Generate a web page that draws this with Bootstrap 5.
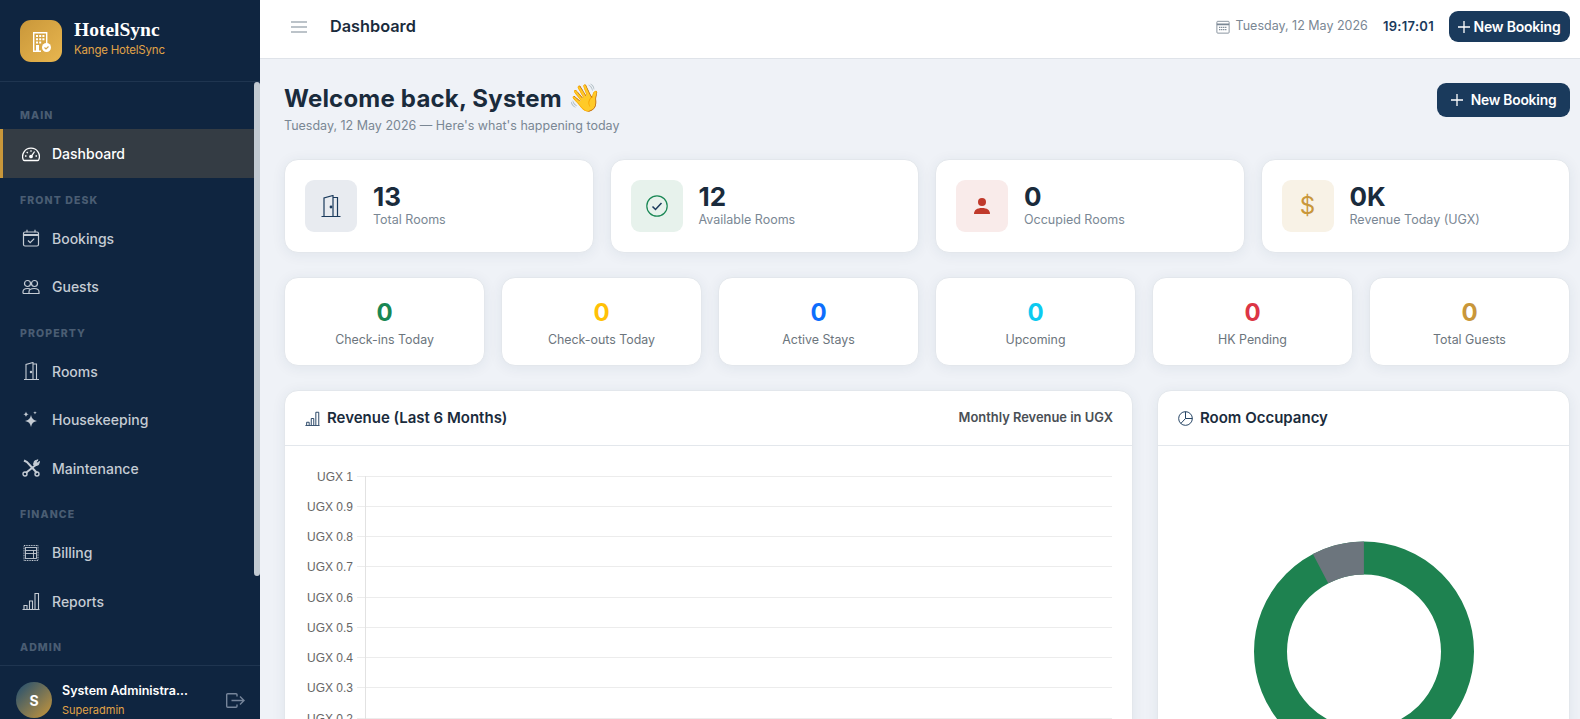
<!DOCTYPE html>
<html lang="en">
<head>
  <meta charset="UTF-8">
  <meta name="viewport" content="width=device-width, initial-scale=1.0">
  <title>Dashboard - HotelSync</title>
  <link href="https://cdn.jsdelivr.net/npm/bootstrap@5.3.1/dist/css/bootstrap.min.css" rel="stylesheet">
  <style>
    html, body { height: 100%; overflow: hidden; }
    body {
      font-family: Inter, "Open Sans", sans-serif;
      background-color: #eff2f7;
      color: #1a2b3c;
    }
    .app-shell { height: 719px; }
    .side-panel { width: 260px; background-color: #0f2540; flex-shrink: 0; }
    .main-col { min-width: 0; }
    .brand-box { height: 82px; padding: 17px 20px; border-bottom: 1px solid #1f3550; gap: 12px; }
    .brand-logo {
      width: 42px; height: 42px; border-radius: 11px;
      background: linear-gradient(135deg, #c9973a, #e8b64f);
    }
    .brand-text { margin-top: -4px; }
    .brand-name { font-family: "Liberation Serif", serif; font-weight: 700; font-size: 19.5px; line-height: 22px; color: #fff; }
    .brand-sub { font-size: 11.5px; line-height: 18px; color: #e0a347; letter-spacing: -.2px; }
    .side-scroll { flex: 1 1 auto; min-height: 0; overflow: hidden; position: relative; padding-top: 27px; }
    .side-scroll::after {
      content: ""; position: absolute; right: 0; top: 0; width: 6px; height: 494px;
      background-color: #c2cad2; border-radius: 3px;
    }
    .nav-head {
      font-size: 10.5px; font-weight: 800; letter-spacing: 1.1px; color: #4a5d73;
      padding: 0 20px; line-height: 14px; margin-bottom: 6.25px;
    }
    .nav-line {
      height: 48.5px; padding-left: 19px; gap: 12px; color: #c5ccd4; font-size: 14px;
      font-weight: 500; text-decoration: none; border-left: 3px solid transparent;
    }
    .nav-line.is-on { background-color: #343c44; color: #fff; border-left-color: #c9973a; margin-right: 6px; }
    .nav-group { margin-bottom: 15.75px; }
    .side-user { height: 54px; border-top: 1px solid #1f3550; padding: 16px 16px 0; gap: 10px; flex-shrink: 0; overflow: hidden; }
    .user-dot {
      width: 36px; height: 36px; border-radius: 50%; color: #fff; font-weight: 700; font-size: 14px;
      background: linear-gradient(135deg, #1e4d72, #c9973a); flex-shrink: 0;
    }
    .user-name { font-size: 12.5px; font-weight: 600; line-height: 18px; color: #fff; width: 128px; white-space: nowrap; overflow: hidden; text-overflow: ellipsis; }
    .user-role { font-size: 11px; line-height: 20px; color: #e0a347; }
    .user-exit { margin-top: 11px; margin-left: 1px; margin-right: -1px; }
    .top-strip { height: 59px; background-color: #fff; border-bottom: 1px solid #dfe3e9; padding: 0 10px 5px 31px; flex-shrink: 0; }
    .top-title { font-size: 16.3px; font-weight: 600; color: #1a2b3c; margin-left: 23px; }
    .top-cal { margin-right: 6px; }
    .top-date { font-size: 12.5px; color: #7a8794; }
    .top-clock { font-size: 13px; font-weight: 600; color: #1a3a5c; letter-spacing: .3px; margin: 0 15px; }
    .book-btn { background-color: #1a3a5c; color: #fff; font-weight: 600; border: 0; border-radius: 9px; padding: 0; letter-spacing: -.2px; }
    .book-btn:hover { background-color: #16324f; color: #fff; }
    .book-sm { width: 121px; height: 31px; font-size: 14px; gap: 3px; }
    .book-lg { width: 133px; height: 34px; font-size: 13.8px; gap: 8px; margin-top: 2px; }
    .page-body { padding: 22px 10px 0 24px; overflow: hidden; }
    .hello-title { font-size: 24px; font-weight: 700; line-height: 36px; margin: 0; color: #1a2b3c; letter-spacing: .2px; }
    .hello-wave { font-size: 27px; line-height: 1; }
    .hello-sub { font-size: 12.5px; line-height: 18px; color: #7a8794; }
    .stat-grid { display: grid; grid-template-columns: repeat(4, 1fr); gap: 16px; margin-top: 24px; }
    .mini-grid { display: grid; grid-template-columns: repeat(6, 1fr); gap: 16px; margin-top: 24px; }
    .chart-grid { display: grid; grid-template-columns: 849px 1fr; gap: 24px; margin-top: 24px; }
    .tile {
      background-color: #fff; border: 1px solid #e3e7ec; border-radius: 14px;
      box-shadow: 0 2px 14px rgba(26, 58, 92, .07);
    }
    .stat-tile { height: 94px; padding: 20px; gap: 16px; }
    .stat-icon { width: 52px; height: 52px; border-radius: 9px; flex-shrink: 0; }
    .stat-dollar { background-color: #f8f2e6; color: #c9973a; font-size: 24px; }
    .stat-num { font-size: 26px; font-weight: 700; line-height: 28px; color: #1a2b3c; }
    .stat-cap { font-size: 12.5px; line-height: 18px; color: #7a8794; }
    .mini-tile { height: 89px; text-align: center; padding-top: 20px; }
    .mini-num { font-size: 24px; font-weight: 700; line-height: 30px; }
    .mini-cap { font-size: 12.4px; line-height: 18px; color: #6c757d; margin-top: 3px; }
    .panel-head { height: 55px; padding: 0 19px 0 20px; border-bottom: 1px solid #e3e7ec; }
    .panel-title { font-size: 15px; font-weight: 600; color: #1a2b3c; gap: 7px; }
    .panel-note { font-size: 12.9px; font-weight: 600; color: #4a4f55; }
    .chart-tile { height: 400px; overflow: hidden; }
    .axis-text { font-family: "Liberation Sans", sans-serif; font-size: 12px; fill: #666; }
  </style>
</head>
<body>
<div class="app-shell d-flex">
  <aside class="side-panel d-flex flex-column">
    <div class="brand-box d-flex align-items-center">
      <div class="brand-logo d-flex align-items-center justify-content-center">
        <svg width="20" height="22" viewBox="0 0 20 22">
          <path fill="none" stroke="#fff" stroke-width="1.4" d="M2.700 21.300V2.700h13v12"/>
          <path fill="#fff" d="M2 20.500h8V22H2zM5 5h2v2H5zM8.200 5h2v2h-2zM11.400 5h2v2h-2zM5 8.200h2v2H5zM8.200 8.200h2v2h-2zM11.400 8.200h2v2h-2zM5 11.400h2v2H5zM8.200 11.400h2v2h-2zM5 15h3v6H5z"/>
          <circle cx="15.500" cy="17.500" r="4.500" fill="#fff"/>
          <path d="M13.500 17.500l1.500 1.500 2.500-2.500" fill="none" stroke="#d4a548" stroke-width="1.100"/>
        </svg>
      </div>
      <div class="brand-text">
        <div class="brand-name">HotelSync</div>
        <div class="brand-sub">Kange HotelSync</div>
      </div>
    </div>
    <nav class="side-scroll">
      <div class="nav-head">MAIN</div>
      <a href="#" class="nav-line is-on d-flex align-items-center nav-group">
        <svg width="18" height="18" viewBox="0 0 18 18" fill="none" stroke="#fff" stroke-width="1.300">
          <path d="M2.600 15.500h12.800c.7 0 1.100-.3 1.400-.9A8.300 8.300 0 0 0 9 3.200a8.300 8.300 0 0 0-7.800 11.400c.3.600.7.900 1.400.9z"/>
          <path d="M9 5.200v1.600M4.700 7l1.100 1.100M3 11h1.500M13.500 11H15M12.600 6.500l-3 4.300"/>
          <circle cx="9" cy="11.500" r="1.200" fill="#fff"/>
        </svg>
        <span>Dashboard</span>
      </a>
      <div class="nav-head">FRONT DESK</div>
      <a href="#" class="nav-line d-flex align-items-center">
        <svg width="18" height="18" viewBox="0 0 18 18" fill="none" stroke="#c5ccd4" stroke-width="1.200">
          <rect x="1.500" y="3" width="15" height="14" rx="1.500"/>
          <path d="M1.500 6h15" stroke-width="2"/>
          <path d="M5 .8v2.500M13 .8v2.500M6 11.500l2.200 2.200 4-4"/>
        </svg>
        <span>Bookings</span>
      </a>
      <a href="#" class="nav-line d-flex align-items-center nav-group">
        <svg width="18" height="18" viewBox="0 0 18 18" fill="none" stroke="#c5ccd4" stroke-width="1.200">
          <circle cx="5.500" cy="5.500" r="3"/>
          <circle cx="12.500" cy="5.500" r="3"/>
          <path d="M1 15.500v-1.800c0-2 1.700-3.200 4.500-3.200.9 0 1.700.1 2.300.4M7 15.500h10v-1.800c0-2-2-3.200-4.800-3.200S7 11.700 7 13.700zM1 15.500h6"/>
        </svg>
        <span>Guests</span>
      </a>
      <div class="nav-head">PROPERTY</div>
      <a href="#" class="nav-line d-flex align-items-center">
        <svg width="18" height="18" viewBox="0 0 18 18" fill="none" stroke="#c5ccd4" stroke-width="1.100">
          <path d="M2 17.500h15M4 17.500V2.500L11 .5v17M11 2h3.500v15.500"/>
          <circle cx="9" cy="10" r=".7" fill="#c5ccd4"/>
        </svg>
        <span>Rooms</span>
      </a>
      <a href="#" class="nav-line d-flex align-items-center">
        <svg width="18" height="18" viewBox="0 0 18 18" fill="#c5ccd4">
          <path d="M9 4c.6 3.600 2.400 5.400 6 6-3.600.6-5.400 2.400-6 6-.6-3.600-2.400-5.400-6-6 3.600-.6 5.400-2.400 6-6z"/>
          <path d="M4 .5c.3 1.700 1.100 2.500 2.800 2.800C5.100 3.600 4.300 4.400 4 6.100 3.700 4.400 2.900 3.600 1.200 3.300 2.900 3 3.700 2.200 4 .5z"/>
          <path d="M13 0c.2 1.100.7 1.600 1.800 1.800-1.100.2-1.600.7-1.800 1.800-.2-1.100-.7-1.600-1.800-1.800C12.300 1.600 12.800 1.100 13 0z"/>
        </svg>
        <span>Housekeeping</span>
      </a>
      <a href="#" class="nav-line d-flex align-items-center nav-group">
        <svg width="18" height="18" viewBox="0 0 18 18" fill="none" stroke="#c5ccd4">
          <path d="M2 1.500l3 1.500 10 11" stroke-width="2"/>
          <path d="M15.500 4.500 3.800 14" stroke-width="2"/>
          <path d="M11.500 5.500 12.500 2 16 .8 14.300 3l1 1 2.200-1.500-1 3.300-3.500 1z" fill="#c5ccd4"/>
          <circle cx="3" cy="15" r="2" stroke-width="1.400"/>
          <circle cx="15" cy="15" r="2" stroke-width="1.400"/>
        </svg>
        <span>Maintenance</span>
      </a>
      <div class="nav-head">FINANCE</div>
      <a href="#" class="nav-line d-flex align-items-center">
        <svg width="18" height="18" viewBox="0 0 18 18" fill="none" stroke="#c5ccd4">
          <rect x="2" y="1.500" width="14" height="15" stroke-dasharray="1 .7"/>
          <rect x="3.500" y="3.500" width="11" height="11" stroke-width=".9"/>
          <path d="M3.500 6.500h11M3.500 9.500h11M11.500 6.500v8" stroke-width=".9"/>
        </svg>
        <span>Billing</span>
      </a>
      <a href="#" class="nav-line d-flex align-items-center nav-group">
        <svg width="18" height="18" viewBox="0 0 18 18" fill="none" stroke="#c5ccd4" stroke-width="1.100">
          <path d="M.5 17.500h17M2 17v-3.500h3V17M7.500 17V9h3v8M13 17V1.500h3.500V17"/>
        </svg>
        <span>Reports</span>
      </a>
      <div class="nav-head">ADMIN</div>
    </nav>
    <div class="side-user d-flex">
      <div class="user-dot d-flex align-items-center justify-content-center">S</div>
      <div class="flex-grow-1">
        <div class="user-name">System Administrator</div>
        <div class="user-role">Superadmin</div>
      </div>
      <svg class="user-exit" width="19" height="15" viewBox="0 0 19 15" fill="none" stroke="#76859a" stroke-width="1.400">
        <path d="M11 3.500V1.700a1 1 0 0 0-1-1H1.700a1 1 0 0 0-1 1v11.600a1 1 0 0 0 1 1H10a1 1 0 0 0 1-1v-1.800M5.500 7.500H18M14 3.500l4 4-4 4"/>
      </svg>
    </div>
  </aside>
  <div class="main-col flex-grow-1 d-flex flex-column">
    <header class="top-strip d-flex align-items-center">
      <svg width="16" height="12" viewBox="0 0 16 12" fill="none" stroke="#7a8794" stroke-width="1.200"><path d="M0 1h16M0 6h16M0 11h16"/></svg>
      <div class="top-title">Dashboard</div>
      <div class="ms-auto d-flex align-items-center">
        <svg class="top-cal" width="14" height="14" viewBox="0 0 16 16" fill="none" stroke="#7a8794"><rect x="1" y="1.500" width="14" height="13.500" rx="1"/><path d="M1 5h14" stroke-width="2"/><path d="M3.500 8.500h9M3.500 11h9" stroke-dasharray="1.500 .8" stroke-width="1.300"/></svg>
        <span class="top-date">Tuesday, 12 May 2026</span>
        <span class="top-clock">19:17:01</span>
        <button type="button" class="btn book-btn book-sm d-flex align-items-center justify-content-center">
          <svg width="12" height="12" viewBox="0 0 12 12" stroke="#fff" stroke-width="1.300"><path d="M6 0v12M0 6h12"/></svg>New Booking
        </button>
      </div>
    </header>
    <main class="page-body flex-grow-1">
      <div class="d-flex justify-content-between align-items-start">
        <div>
          <h1 class="hello-title">Welcome back, System <span class="hello-wave">👋</span></h1>
          <div class="hello-sub">Tuesday, 12 May 2026 — Here's what's happening today</div>
        </div>
        <button type="button" class="btn book-btn book-lg d-flex align-items-center justify-content-center">
          <svg width="12" height="12" viewBox="0 0 12 12" stroke="#fff" stroke-width="1.300"><path d="M6 0v12M0 6h12"/></svg>New Booking
        </button>
      </div>
      <div class="stat-grid">
        <div class="tile stat-tile d-flex align-items-center">
          <div class="stat-icon d-flex align-items-center justify-content-center" style="background:#e8ebf0">
            <svg width="20" height="22" viewBox="0 0 20 22" fill="none" stroke="#1a3a5c" stroke-width="1.200"><path d="M.5 21.500h19M3 21.500V3l9-2.500v21M12 2.500h4.500v19"/><circle cx="10" cy="12" r=".8" fill="#1a3a5c"/></svg>
          </div>
          <div><div class="stat-num">13</div><div class="stat-cap">Total Rooms</div></div>
        </div>
        <div class="tile stat-tile d-flex align-items-center">
          <div class="stat-icon d-flex align-items-center justify-content-center" style="background:#e7f2ec">
            <svg width="22" height="22" viewBox="0 0 22 22" fill="none" stroke="#198754" stroke-width="1.200"><circle cx="11" cy="11" r="10.200"/><path d="M6.500 11.500l3 3 6-6.500" stroke="#1a3a5c" stroke-width="1.500"/></svg>
          </div>
          <div><div class="stat-num">12</div><div class="stat-cap">Available Rooms</div></div>
        </div>
        <div class="tile stat-tile d-flex align-items-center">
          <div class="stat-icon d-flex align-items-center justify-content-center" style="background:#f9ebea">
            <svg width="18" height="18" viewBox="0 0 18 18" fill="#c0392b"><circle cx="9" cy="5" r="4"/><path d="M1 17c0-4 3-6 8-6s8 2 8 6z"/></svg>
          </div>
          <div><div class="stat-num">0</div><div class="stat-cap">Occupied Rooms</div></div>
        </div>
        <div class="tile stat-tile d-flex align-items-center">
          <div class="stat-icon stat-dollar d-flex align-items-center justify-content-center">$</div>
          <div><div class="stat-num">0K</div><div class="stat-cap">Revenue Today (UGX)</div></div>
        </div>
      </div>
      <div class="mini-grid">
        <div class="tile mini-tile"><div class="mini-num" style="color:#198754">0</div><div class="mini-cap">Check-ins Today</div></div>
        <div class="tile mini-tile"><div class="mini-num" style="color:#ffc107">0</div><div class="mini-cap">Check-outs Today</div></div>
        <div class="tile mini-tile"><div class="mini-num" style="color:#0d6efd">0</div><div class="mini-cap">Active Stays</div></div>
        <div class="tile mini-tile"><div class="mini-num" style="color:#0dcaf0">0</div><div class="mini-cap">Upcoming</div></div>
        <div class="tile mini-tile"><div class="mini-num" style="color:#dc3545">0</div><div class="mini-cap">HK Pending</div></div>
        <div class="tile mini-tile"><div class="mini-num" style="color:#c9973a">0</div><div class="mini-cap">Total Guests</div></div>
      </div>
      <div class="chart-grid">
        <section class="tile chart-tile">
          <div class="panel-head d-flex align-items-center justify-content-between">
            <div class="panel-title d-flex align-items-center">
              <svg width="15" height="15" viewBox="0 0 18 18" fill="none" stroke="#1a3a5c" stroke-width="1.100"><path d="M.5 17.500h17M2 17v-3.500h3V17M7.500 17V9h3v8M13 17V1.500h3.500V17"/></svg>
              Revenue (Last 6 Months)
            </div>
            <div class="panel-note">Monthly Revenue in UGX</div>
          </div>
          <svg width="847" height="344" viewBox="0 0 847 344">
            <g stroke="#ececec" fill="none"><path d="M72 30.500H827M72 60.500H827M72 90.500H827M72 120.500H827M72 151.500H827M72 181.500H827M72 211.500H827M72 241.500H827M72 272.500H827"/></g>
            <path d="M80.500 30V344" stroke="#e2e2e2" fill="none"/>
            <g class="axis-text" text-anchor="end">
              <text x="68" y="35">UGX 1</text><text x="68" y="65">UGX 0.9</text><text x="68" y="95">UGX 0.8</text><text x="68" y="125">UGX 0.7</text><text x="68" y="156">UGX 0.6</text><text x="68" y="186">UGX 0.5</text><text x="68" y="216">UGX 0.4</text><text x="68" y="246">UGX 0.3</text><text x="68" y="277">UGX 0.2</text>
            </g>
          </svg>
        </section>
        <section class="tile chart-tile">
          <div class="panel-head d-flex align-items-center">
            <div class="panel-title d-flex align-items-center">
              <svg width="15" height="15" viewBox="0 0 16 16" fill="none" stroke="#1a3a5c"><circle cx="8" cy="8" r="7.300"/><path d="M8 .7V8h7.300M8 8l-5 5.300"/></svg>
              Room Occupancy
            </div>
          </div>
          <svg width="411" height="344" viewBox="0 0 411 344">
            <circle cx="206" cy="205.500" r="93.500" fill="none" stroke="#1e8250" stroke-width="33"/>
            <circle cx="206" cy="205.500" r="93.500" fill="none" stroke="#6c757d" stroke-width="33" pathLength="13" stroke-dasharray="1 12" transform="rotate(-117.690 206 205.500)"/>
          </svg>
        </section>
      </div>
    </main>
  </div>
</div>
<script src="https://cdn.jsdelivr.net/npm/bootstrap@5.3.1/dist/js/bootstrap.bundle.min.js"></script>
</body>
</html>
